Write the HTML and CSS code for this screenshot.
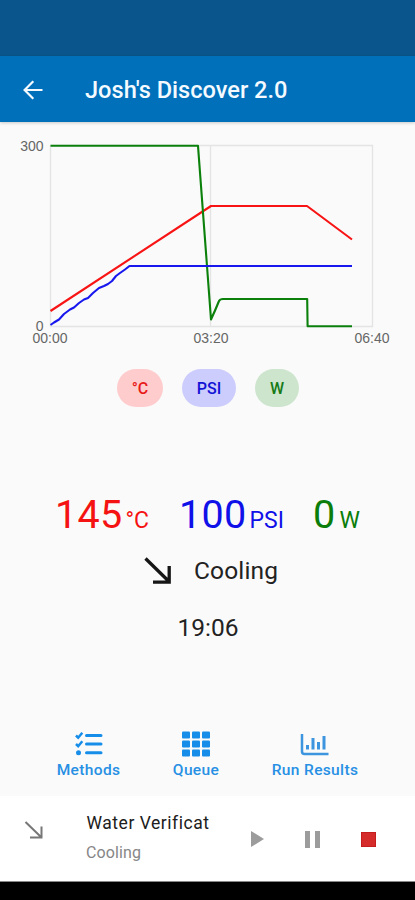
FILE: index.html
```html
<!DOCTYPE html>
<html lang="en">
<head>
<meta charset="utf-8">
<meta name="viewport" content="width=device-width, initial-scale=1">
<title>Josh's Discover 2.0</title>
<link rel="stylesheet" href="styles.css">
</head>
<body>
<div class="status"></div>
<header class="appbar">
  <svg class="back" width="20" height="20" viewBox="0 0 20 20"><path d="M19.5 10H2M10.3 1.2L1.6 10l8.7 8.8"/></svg>
  <h1>Josh's Discover 2.0</h1>
</header>
<main>
  <svg class="chart" width="415" height="226" viewBox="0 122 415 226">
    <path class="grid" d="M50.5 145.5H372.5V326.5H50.5ZM210.5 145.5V326.5"/>
    <path class="line red" d="M50.5 311L211 206H307L352 239.5"/>
    <path class="line green" d="M50.5 145.8H198L211 319.5C214 313 217 306 219 301Q220 299 223 299H307.2L307.6 326.2H352"/>
    <path class="line blue" d="M50.5 325L54 322.5L59 319.5L64 314L70 309.500L74 307.500L79 303L84 299.500L88 298L93 293L99 288L104 286L108 284L112 281L116 276L120 273L125 269.5L129.500 266H352"/>
    <g class="axis">
      <text x="43.500" y="151" text-anchor="end">300</text>
      <text x="43.500" y="330.500" text-anchor="end">0</text>
      <text x="50" y="343" text-anchor="middle">00:00</text>
      <text x="211" y="343" text-anchor="middle">03:20</text>
      <text x="372" y="343" text-anchor="middle">06:40</text>
    </g>
  </svg>
  <div class="chips">
    <span class="chip temp">°C</span>
    <span class="chip pres">PSI</span>
    <span class="chip watt">W</span>
  </div>
  <div class="readings">
    <div class="reading r-temp"><b>145</b><i>°C</i></div>
    <div class="reading r-pres"><b>100</b><i>PSI</i></div>
    <div class="reading r-watt"><b>0</b><i>W</i></div>
  </div>
  <div class="state">
    <svg width="28" height="28" viewBox="0 0 28 28"><path d="M1.500 1.500L25 24.500M25.200 9V25.200H9"/></svg>
    <span>Cooling</span>
  </div>
  <div class="time">19:06</div>
  <nav>
    <a class="methods">
      <svg width="28" height="26" viewBox="0 0 28 26"><path class="tick" d="M1 4.500L3.200 6.700L7.300 1.800M1 13L3.200 15.200L7.300 10.300"/><path class="bar" d="M11.500 4.500H26M11.500 13H26M11.500 21.800H26"/><circle cx="3.500" cy="21.800" r="2.500"/></svg>
      <span>Methods</span>
    </a>
    <a class="queue">
      <svg width="30" height="26" viewBox="0 0 30 26"><g><rect x="1" y="0.500" width="8" height="7" rx="1"/><rect x="11" y="0.500" width="8" height="7" rx="1"/><rect x="21" y="0.500" width="8" height="7" rx="1"/><rect x="1" y="9.500" width="8" height="7" rx="1"/><rect x="11" y="9.500" width="8" height="7" rx="1"/><rect x="21" y="9.500" width="8" height="7" rx="1"/><rect x="1" y="18.500" width="8" height="7" rx="1"/><rect x="11" y="18.500" width="8" height="7" rx="1"/><rect x="21" y="18.500" width="8" height="7" rx="1"/></g></svg>
      <span>Queue</span>
    </a>
    <a class="results">
      <svg width="30" height="26" viewBox="0 0 30 26"><path class="frame" d="M2 3V20.500Q2 23 4.500 23H28.500"/><path class="cols" d="M7.500 14V18.500M13 7V18.500M18.500 11V18.500M24 5V18.500"/></svg>
      <span>Run Results</span>
    </a>
  </nav>
</main>
<footer>
  <svg class="trend" width="20" height="20" viewBox="0 0 20 20"><path d="M1.500 2L17 17M17.500 6.500V17.600H6"/></svg>
  <div class="job"><div class="name">Water Verificat</div><div class="phase">Cooling</div></div>
  <div class="controls">
    <svg width="13" height="16" viewBox="0 0 13 16"><path fill="#9c9c9c" d="M0 0L13 8L0 16Z"/></svg>
    <svg width="15" height="17" viewBox="0 0 15 17"><path fill="#9c9c9c" d="M0 0H5V17H0ZM10 0H15V17H10Z"/></svg>
    <svg width="15" height="15" viewBox="0 0 15 15"><path fill="#c51d1d" d="M0 0H15V15H0Z"/><path fill="#d52b2b" d="M1 1H14V14H1Z"/></svg>
  </div>
</footer>
<div class="system"></div>
</body>
</html>
```
FILE: styles.css
```css
* { box-sizing: border-box; }
body {
  margin: 0;
  width: 415px;
  height: 900px;
  overflow: hidden;
  background: #fafafa;
  font-family: Roboto, sans-serif;
  display: flex;
  flex-direction: column;
}
svg { display: block; flex: none; }
.status { height: 56px; background: #0a558b; }
.appbar {
  height: 66px;
  padding: 2px 0 0 23px;
  display: flex;
  align-items: center;
  gap: 42px;
  background: #0070bb;
  color: #f4faff;
  box-shadow: 0 1px 3px #0003;
}
.back { fill: none; stroke: #f4faff; stroke-width: 2.2; }
h1 { margin: 0; font-size: 23.6px; font-weight: 500; white-space: nowrap; }
main { height: 674px; }
.grid { fill: none; stroke: #e4e4e4; stroke-width: 1.3; }
.line { fill: none; stroke-width: 2.1; stroke-linejoin: round; }
.red { stroke: #f81414; }
.green { stroke: #0b800b; }
.blue { stroke: #1717ee; }
.axis { font: 14px "Liberation Sans", sans-serif; fill: #666; }
.chips { display: flex; gap: 19px; padding: 21px 0 0 117px; height: 60px; }
.chip {
  height: 38px;
  border-radius: 19px;
  display: flex;
  align-items: center;
  justify-content: center;
  font-size: 16px;
  font-weight: 500;
}
.temp { width: 46px; background: #ffcccd; color: #e81b1b; }
.pres { width: 54px; background: #ccccfd; color: #1313d5; }
.watt { width: 44px; background: #cde4cd; color: #167b16; }
.readings { display: flex; height: 130px; padding: 84px 0 0 55px; line-height: 46px; }
.reading { display: flex; align-items: baseline; }
.reading b { font-size: 39.5px; font-weight: 400; letter-spacing: 0.3px; }
.reading i { font-size: 23px; font-style: normal; }
.r-temp { width: 124px; color: #f51212; gap: 3px; }
.r-pres { width: 134px; color: #1010e8; gap: 3px; }
.r-watt { color: #0b7d0b; gap: 4px; }
.state { display: flex; align-items: center; gap: 22px; height: 65px; padding-left: 144px; font-size: 24.5px; color: #222; }
.state span { letter-spacing: 0.15px; }
.state svg path { fill: none; stroke: #151515; stroke-width: 3.3; }
.time { height: 49px; padding-left: 1px; text-align: center; line-height: 50px; font-size: 24.5px; color: #222; }
nav { display: flex; padding: 79px 0 0 56px; font-size: 15.5px; font-weight: 500; letter-spacing: 0.35px; line-height: 20px; color: #2790e4; }
nav a { display: flex; flex-direction: column; align-items: center; gap: 3px; white-space: nowrap; }
nav svg { fill: #168de9; }
.methods { width: 65px; }
.queue { width: 48px; margin-left: 51px; }
.results { width: 88px; margin-left: 51px; }
.tick, .bar, .frame, .cols { fill: none; stroke: #168de9; stroke-width: 2.5; }
.bar { stroke-width: 3; stroke-linecap: round; }
.frame, .cols { stroke: #3d94df; }
.cols { stroke-width: 3; }
footer { height: 86px; display: flex; background: #fff; border-bottom: 1px solid #888; }
.trend { margin: 24px 0 0 24px; }
.trend path { fill: none; stroke: #777; stroke-width: 2; }
.job { width: 124px; margin: 12px 0 0 42px; white-space: nowrap; }
.name { overflow: hidden; padding-left: 0.5px; font-size: 17.5px; letter-spacing: 0.53px; line-height: 30px; color: #202020; }
.phase { font-size: 16px; line-height: 30px; letter-spacing: 0.1px; color: #868686; }
.controls { display: flex; align-items: center; gap: 41px; margin-left: 41px; padding-top: 1px; }
.system { height: 18px; background: #000; }
```
